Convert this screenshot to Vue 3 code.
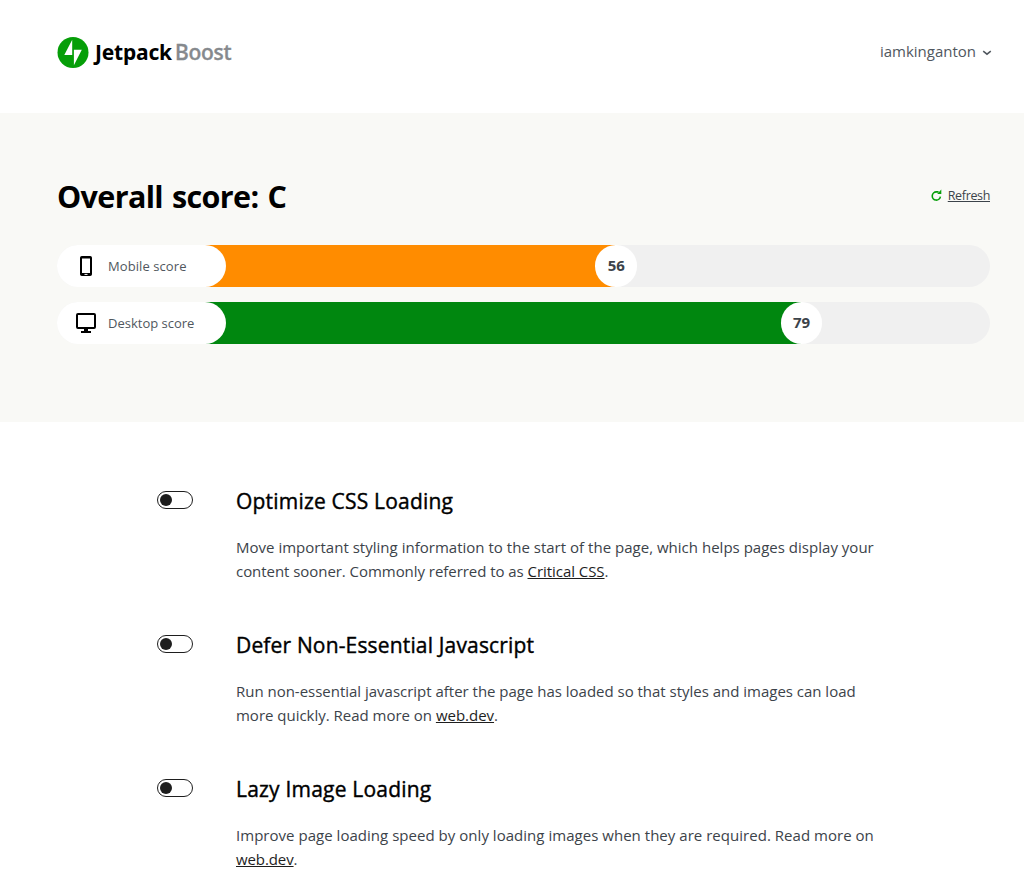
<script setup>
const scores = [
  { id: 'mobile', label: 'Mobile score', value: 56, color: '#ff8c00' },
  { id: 'desktop', label: 'Desktop score', value: 79, color: '#00870f' },
]

const fillWidth = (value) => `${128.6 + value * 8.06}px`

const features = [
  {
    title: 'Optimize CSS Loading',
    key: 'css',
    first: 'Move important styling information to the start of the page, which helps pages display your',
    second: 'content sooner. Commonly referred to as ',
    link: 'Critical CSS',
  },
  {
    title: 'Defer Non-Essential Javascript',
    key: 'defer',
    first: 'Run non-essential javascript after the page has loaded so that styles and images can load',
    second: 'more quickly. Read more on ',
    link: 'web.dev',
  },
  {
    title: 'Lazy Image Loading',
    key: 'lazy',
    first: 'Improve page loading speed by only loading images when they are required. Read more on',
    second: '',
    link: 'web.dev',
  },
]
</script>

<template>
  <div class="page">
    <header class="header">
      <div class="brand">
        <svg class="mark" viewBox="0 0 32 32">
          <circle cx="16" cy="16.5" r="15.5" fill="#069e08" />
          <path d="M15.2 3.7V19H7.3z M16.9 29.2V13.8H24.8z" fill="#fff" />
        </svg>
        <span class="jetpack">Jetpack</span>
        <span class="boost">Boost</span>
      </div>
      <div class="user">
        <span class="username">iamkinganton</span>
        <svg class="chevron" viewBox="0 0 10 6"><path d="M1.2 1.1L5 4.2L8.8 1.1" fill="none" stroke="#50575e" stroke-width="1.5" /></svg>
      </div>
    </header>

    <section class="scores">
      <div class="score-head">
        <h1>Overall score: C</h1>
        <a class="refresh">
          <svg viewBox="0 0 12 14">
            <path d="M7.6 3.9H5.4A4.1 4.1 0 1 0 9.4 8.6" fill="none" stroke="#069e08" stroke-width="1.6" />
            <path d="M10.3 1.6V6H6.2z" fill="#069e08" />
          </svg>
          <span>Refresh</span>
        </a>
      </div>
      <div v-for="s in scores" :key="s.id" class="track">
        <div class="fill" :style="{ width: fillWidth(s.value), color: s.color }">
          <div class="pill">
            <svg v-if="s.id === 'mobile'" class="device" viewBox="0 0 22 22">
              <path fill-rule="evenodd" d="M6.8 1H15.2Q17 1 17 2.8V19.2Q17 21 15.2 21H6.8Q5 21 5 19.2V2.8Q5 1 6.8 1zM7 3.5V18H15V3.5z" fill="#000" />
              <path d="M9.5 19.4H12.5" stroke="#fff" />
            </svg>
            <svg v-else class="device" viewBox="0 0 22 22">
              <rect x="2" y="2" width="18" height="14" rx="1" fill="none" stroke="#000" stroke-width="2" />
              <path d="M9 16H13V19H16V21H6V19H9z" fill="#000" />
            </svg>
            <span :class="['label', s.id]">{{ s.label }}</span>
          </div>
          <div class="value">{{ s.value }}</div>
        </div>
      </div>
    </section>

    <main class="features">
      <article v-for="f in features" :key="f.key" :class="['feature', f.key]">
        <div class="toggle"><i></i></div>
        <div class="body">
          <h2>{{ f.title }}</h2>
          <p>
            <span class="line first">{{ f.first }}</span>
            <span class="line second">{{ f.second }}<a>{{ f.link }}</a>.</span>
          </p>
        </div>
      </article>
    </main>
  </div>
</template>

<style>
body {
  margin: 0;
  background: #fff;
  overflow: hidden;
}
</style>

<style scoped>
.page {
  width: 1024px;
  height: 870px;
  overflow: hidden;
  background: #fff;
  font-family: "Open Sans", "Noto Sans", sans-serif;
  color: #3c434a;
  box-sizing: border-box;
}
.header {
  height: 113px;
  box-sizing: border-box;
  padding: 36px 33px 0 57px;
  display: flex;
  justify-content: space-between;
}
.brand {
  display: flex;
  height: 32px;
  line-height: 32px;
  font-family: "Noto Sans", sans-serif;
}
.mark { width: 32px; height: 32px; margin-right: 6px; }
.jetpack {
  width: 80px;
  white-space: nowrap;
  font-size: 21px;
  font-weight: 700;
  letter-spacing: -0.2px;
  color: #000;
}
.boost {
  font-size: 21px;
  font-weight: 500;
  letter-spacing: -0.3px;
  color: #85898d;
  -webkit-text-stroke: 0.4px #85898d;
}
.user { display: flex; height: 31px; align-items: center; }
.username { font-size: 15px; color: #50575e; letter-spacing: 0; line-height: 21px; margin-bottom: 1px; }
.chevron { width: 10px; height: 6px; margin: 3px -1px 0 6px; }

.scores {
  height: 309px;
  box-sizing: border-box;
  padding: 60px 34px 0 57px;
  background: #f9f9f6;
}
.score-head { display: flex; justify-content: space-between; height: 72px; }
h1 {
  margin: 0;
  font-size: 30.5px;
  line-height: 47px;
  font-weight: 700;
  letter-spacing: -0.65px;
  word-spacing: 1.8px;
  color: #000;
  white-space: nowrap;
}
.refresh {
  display: flex;
  height: 44px;
  align-items: center;
  font-size: 12.5px;
  letter-spacing: -0.35px;
}
.refresh svg { width: 12px; height: 14px; margin-right: 5px; }
.refresh span { text-decoration: underline; }
.track {
  height: 41.5px;
  margin-bottom: 15.7px;
  border-radius: 21px;
  background: #f0f0f0;
}
.fill {
  display: flex;
  justify-content: space-between;
  height: 100%;
  border-radius: 21px;
  background: linear-gradient(currentColor, currentColor) 100px 0 / calc(100% - 121px) 100% no-repeat;
}
.pill {
  display: flex;
  align-items: center;
  width: 169px;
  box-sizing: border-box;
  padding-left: 18px;
  border-radius: 21px;
  background: #fff;
}
.device { width: 22px; height: 22px; margin-right: 11px; }
.label { font-size: 13px; color: #50575e; white-space: nowrap; }
.label.mobile { letter-spacing: 0.08px; }
.value {
  width: 41.5px;
  line-height: 41px;
  border-radius: 50%;
  background: #fff;
  text-align: center;
  font-size: 15px;
  font-weight: 700;
  color: #3c434a;
}

.features { padding: 61px 0 0 157px; }
.feature { display: flex; height: 144px; }
.toggle {
  width: 36px;
  height: 18px;
  box-sizing: border-box;
  margin: 8px 43px 0 0;
  padding: 2px;
  border: 1px solid #1e1e1e;
  border-radius: 9px;
}
.toggle i { display: block; width: 12px; height: 12px; border-radius: 50%; background: #1e1e1e; }
h2 {
  margin: 0 0 16px;
  font-size: 21px;
  line-height: 36px;
  font-weight: 500;
  letter-spacing: 0.2px;
  color: #000;
  -webkit-text-stroke: 0.4px #000;
  white-space: nowrap;
}
.defer h2 { letter-spacing: 0.16px; }
p { margin: 0; font-size: 15px; line-height: 24px; }
.line { display: block; white-space: nowrap; }
.css .first { letter-spacing: 0.016px; }
.css .second { letter-spacing: -0.05px; }
.defer .line { letter-spacing: -0.015px; }
.lazy .first { letter-spacing: 0.03px; }
.lazy .second { letter-spacing: -0.1px; }
p a { text-decoration: underline; color: #1e1e1e; }
</style>
